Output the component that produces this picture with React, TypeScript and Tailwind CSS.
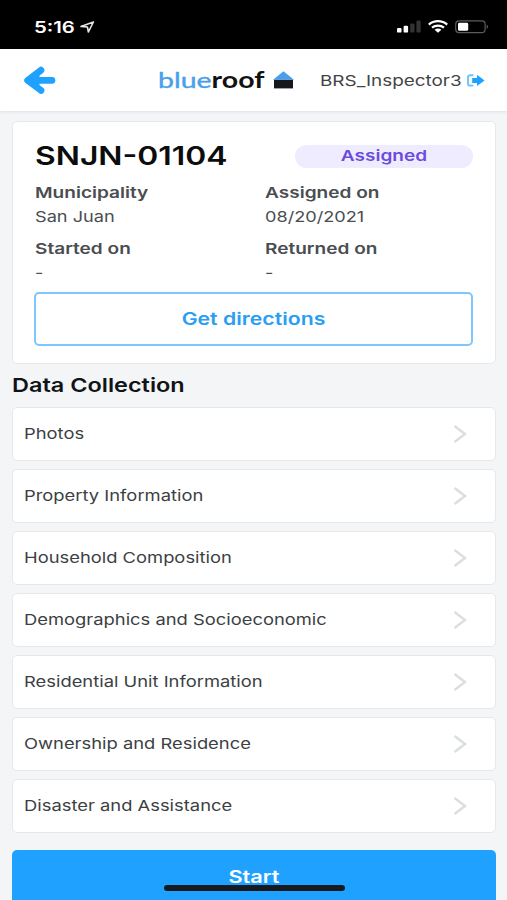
import { ReactNode } from 'react';

const SECTIONS = [
  'Photos',
  'Property Information',
  'Household Composition',
  'Demographics and Socioeconomic',
  'Residential Unit Information',
  'Ownership and Residence',
  'Disaster and Assistance',
];

function StatusBar() {
  return (
    <div className="h-[49px] shrink-0 bg-black flex items-center justify-between pt-1 pl-[34px] pr-[18px]">
      <div className="flex items-center text-white">
        <span className="w-[46px] text-[16px] leading-5 font-semibold">
          <span className="inline-block origin-left scale-x-[1.27]">5:16</span>
        </span>
        <svg width="15" height="12" viewBox="0 0 15 12" fill="none" stroke="#e5e5e5" strokeWidth="1.6" strokeLinejoin="round">
          <path d="M13.4 1 L1 5.4 L7.4 6 L8.4 11 Z" />
        </svg>
      </div>
      <div className="flex items-center">
        <svg width="24" height="13" viewBox="0 0 24 13">
          <rect x="0" y="8" width="4.5" height="4.6" rx="1.2" fill="#fff" />
          <rect x="6.6" y="5.8" width="4.5" height="6.8" rx="1.2" fill="#fff" />
          <rect x="13.2" y="3.4" width="4.3" height="9.2" rx="1.2" fill="#333" />
          <rect x="19.4" y="0.6" width="4.3" height="12" rx="1.2" fill="#333" />
        </svg>
        <svg className="ml-[7px]" width="20" height="13" viewBox="0 0 20 13" fill="none" stroke="#fff" strokeWidth="2.2">
          <path d="M0.8 4.6 C6 0 14 0 19.2 4.6" />
          <path d="M4 7.7 C7.4 4.8 12.6 4.8 16 7.7" />
          <path d="M6.6 9.8 C8.6 8.2 11.4 8.2 13.4 9.8 L10 12.7 Z" fill="#fff" stroke="none" />
        </svg>
        <svg className="ml-[7px]" width="34" height="14" viewBox="0 0 34 14">
          <rect x="0.7" y="0.9" width="29.4" height="11.8" rx="3.4" fill="none" stroke="#5c5c5c" strokeWidth="1.2" />
          <rect x="3" y="2.8" width="10.2" height="8" rx="1.4" fill="#fff" />
          <path d="M31.6 4.8 C33.6 5.6 33.6 8 31.6 8.8 Z" fill="#5c5c5c" />
        </svg>
      </div>
    </div>
  );
}

function Header() {
  return (
    <header className="h-[62px] shrink-0 bg-white flex items-center pl-[24px] pr-[22px] shadow-[0_1px_3px_rgba(30,50,80,0.10)]">
      <svg width="32" height="28" viewBox="0 0 32 28" fill="#1fa2ff" stroke="#1fa2ff" strokeLinecap="round" strokeLinejoin="round">
        <path d="M17 4.2 L3.6 14.4 L17 24.4" fill="none" strokeWidth="6.8" />
        <path d="M5 14.4 H28" strokeWidth="6.6" />
        <path d="M5 14.4 L15 8.4 V20.4 Z" strokeWidth="1" />
      </svg>
      <div className="ml-[102px] w-[115px] text-[22px] leading-7 font-['Lato'] font-bold text-[#111]">
        <span className="inline-block origin-left scale-x-[1.295]">
          <span className="font-normal text-[#4b9fea] [-webkit-text-stroke:0.4px_#4b9fea]">blue</span>roof
        </span>
      </div>
      <svg width="21" height="18" viewBox="0 0 21 18">
        <path d="M1 8.6 H20 V17.4 H1 Z" fill="#15181c" />
        <path d="M10.5 0.2 L21 8.8 H0 Z" fill="#4b9fea" />
      </svg>
      <div className="ml-[26px] w-[147px] text-[15px] leading-5 pt-[2px] text-[#444]">
        <span className="inline-block origin-left scale-x-[1.26]">BRS_Inspector3</span>
      </div>
      <svg className="mt-px" width="18" height="13" viewBox="0 0 18 13">
        <path d="M6.4 1.2 H3.2 Q1 1.2 1 3.4 V9.4 Q1 11.6 3.2 11.6 H6.4" fill="none" stroke="#6cc1ff" strokeWidth="1.9" />
        <path d="M5.2 3.9 H10 V0.8 L17.6 6.4 L10 12 V8.9 H5.2 Z" fill="#1fa2ff" />
      </svg>
    </header>
  );
}

function Field({ label, value }: { label: string; value: string }) {
  return (
    <div className="text-[15px] leading-6 text-[#4a4d51]">
      <div className="font-semibold">
        <span className="inline-block origin-left scale-x-[1.27]">{label}</span>
      </div>
      <div className="h-6">
        <span className="inline-block origin-left scale-x-[1.21]">{value}</span>
      </div>
    </div>
  );
}

function Card({ children }: { children: ReactNode }) {
  return <div className="bg-white border border-[#e6e9ec] rounded-[5px]">{children}</div>;
}

export default function App() {
  return (
    <div className="relative w-full h-[900px] overflow-hidden flex flex-col bg-[#f3f5f7] font-['Inter',sans-serif]">
      <StatusBar />
      <Header />

      <main className="flex flex-col pl-[12px] pt-[10px] pr-[11px]">
        <Card>
          <div className="h-[241px] pl-[21px] pr-[22px] pt-[16px]">
            <div className="flex items-center justify-between h-[36px] pl-px">
              <h1 className="text-[26px] leading-9 font-semibold text-[#0c0c0c]">
                <span className="inline-block origin-left scale-x-[1.225]">SNJN-01104</span>
              </h1>
              <div className="w-[178px] h-[23px] rounded-full bg-[#f0ecff] text-[#6b4bdc] text-[15px] leading-[22px] font-semibold text-center">
                <span className="inline-block scale-x-[1.27]">Assigned</span>
              </div>
            </div>
            <div className="grid grid-cols-[230px_1fr] gap-y-2 mt-[7px] pl-px">
              <Field label="Municipality" value="San Juan" />
              <Field label="Assigned on" value="08/20/2021" />
              <Field label="Started on" value="-" />
              <Field label="Returned on" value="-" />
            </div>
            <button className="mt-[7px] w-full h-[54px] pt-px border-2 border-[#7cc8fd] rounded-[5px] text-[17px] font-semibold text-[#2a9df4]">
              <span className="inline-block scale-x-[1.25]">Get directions</span>
            </button>
          </div>
        </Card>

        <h2 className="h-[43px] text-[19px] leading-[43px] font-semibold text-[#111417]">
          <span className="inline-block origin-left scale-x-[1.235]">Data Collection</span>
        </h2>

        <div className="flex flex-col gap-2">
          {SECTIONS.map((name) => (
            <Card key={name}>
              <div className="h-[52px] flex items-center justify-between pl-[11px] pr-[28px] text-[15px] text-[#3c3f43]">
                <span className="inline-block origin-left scale-x-[1.224]">{name}</span>
                <svg width="14" height="18" viewBox="0 0 14 18" fill="none" stroke="#dcdfe1" strokeWidth="2.6">
                  <path d="M1.5 1 L12 9 L1.5 17" />
                </svg>
              </div>
            </Card>
          ))}
        </div>

        <button className="mt-[17px] h-[54px] pt-[2px] rounded-[5px] bg-[#1fa2ff] text-white text-[17px] font-semibold">
          <span className="inline-block scale-x-[1.28]">Start</span>
        </button>
      </main>

      <div className="absolute left-[164px] top-[885px] w-[181px] h-[6px] rounded-full bg-[#151a20]" />
    </div>
  );
}
